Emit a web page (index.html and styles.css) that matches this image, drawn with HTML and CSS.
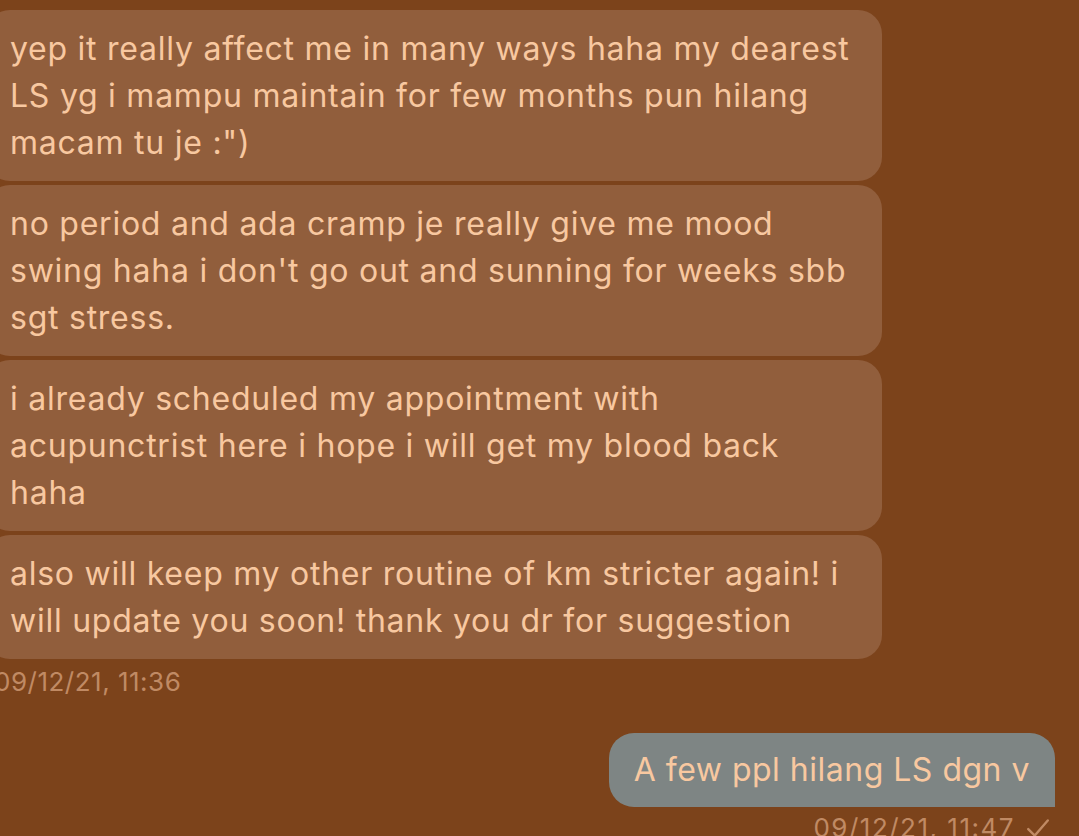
FILE: index.html
```html
<!DOCTYPE html>
<html lang="ms">
<head>
<meta charset="utf-8">
<title>Messages</title>
<link rel="stylesheet" href="styles.css">
</head>
<body>
<main class="thread">
  <section class="group received">
    <div class="bubble">yep it really affect me in many ways haha my dearest<br>LS yg i mampu maintain for few months pun hilang<br>macam tu je :")</div>
    <div class="bubble">no period and ada cramp je really give me mood<br>swing haha i don't go out and sunning for weeks sbb<br>sgt stress.</div>
    <div class="bubble">i already scheduled my appointment with<br>acupunctrist here i hope i will get my blood back<br>haha</div>
    <div class="bubble">also will keep my other routine of km stricter again! i<br>will update you soon! thank you dr for suggestion</div>
    <div class="stamp">09/12/21, 11:36</div>
  </section>
  <section class="group sent">
    <div class="bubble">A few ppl hilang LS dgn v</div>
    <div class="stamp">09/12/21, 11:47<svg class="tick" viewBox="0 0 24 24" width="26" height="26" aria-label="sent"><polyline points="3,13 9,19 21,5" fill="none" stroke="currentColor" stroke-width="2.2" stroke-linecap="round" stroke-linejoin="round"/></svg></div>
  </section>
</main>
</body>
</html>
```
FILE: styles.css
```css
html, body {
  margin: 0;
  padding: 0;
  background: #7c431b;
  height: 100%;
  overflow: hidden;
}

.thread {
  display: flex;
  flex-direction: column;
  padding-top: 10px;
  font-family: Inter, "Noto Sans", sans-serif;
  color: #f8c8a0;
}

.group {
  display: flex;
  flex-direction: column;
  gap: 4px;
}

.bubble {
  font-size: 32px;
  line-height: 47px;
  letter-spacing: 0.75px;
  white-space: nowrap;
}

.received {
  margin-left: -14px;
  width: 896px;
}

.received .bubble {
  background: #915e3c;
  border-radius: 24px;
  padding: 15px 24px;
}

.stamp {
  font-size: 26px;
  line-height: 34px;
  letter-spacing: 0.5px;
  color: #c08a64;
}

.received .stamp {
  padding-left: 8px;
  margin-top: 2px;
}

.sent {
  align-self: flex-end;
  align-items: flex-end;
  margin-top: 34px;
  margin-right: 24px;
}

.sent .bubble {
  background: #7e8584;
  border-radius: 25px 25px 0 25px;
  padding: 13px 25px 14px;
  letter-spacing: 0.5px;
}

.sent .stamp {
  display: flex;
  align-items: center;
  gap: 10px;
  padding-right: 4px;
  letter-spacing: 1.5px;
}

.tick {
  flex: none;
}
```
